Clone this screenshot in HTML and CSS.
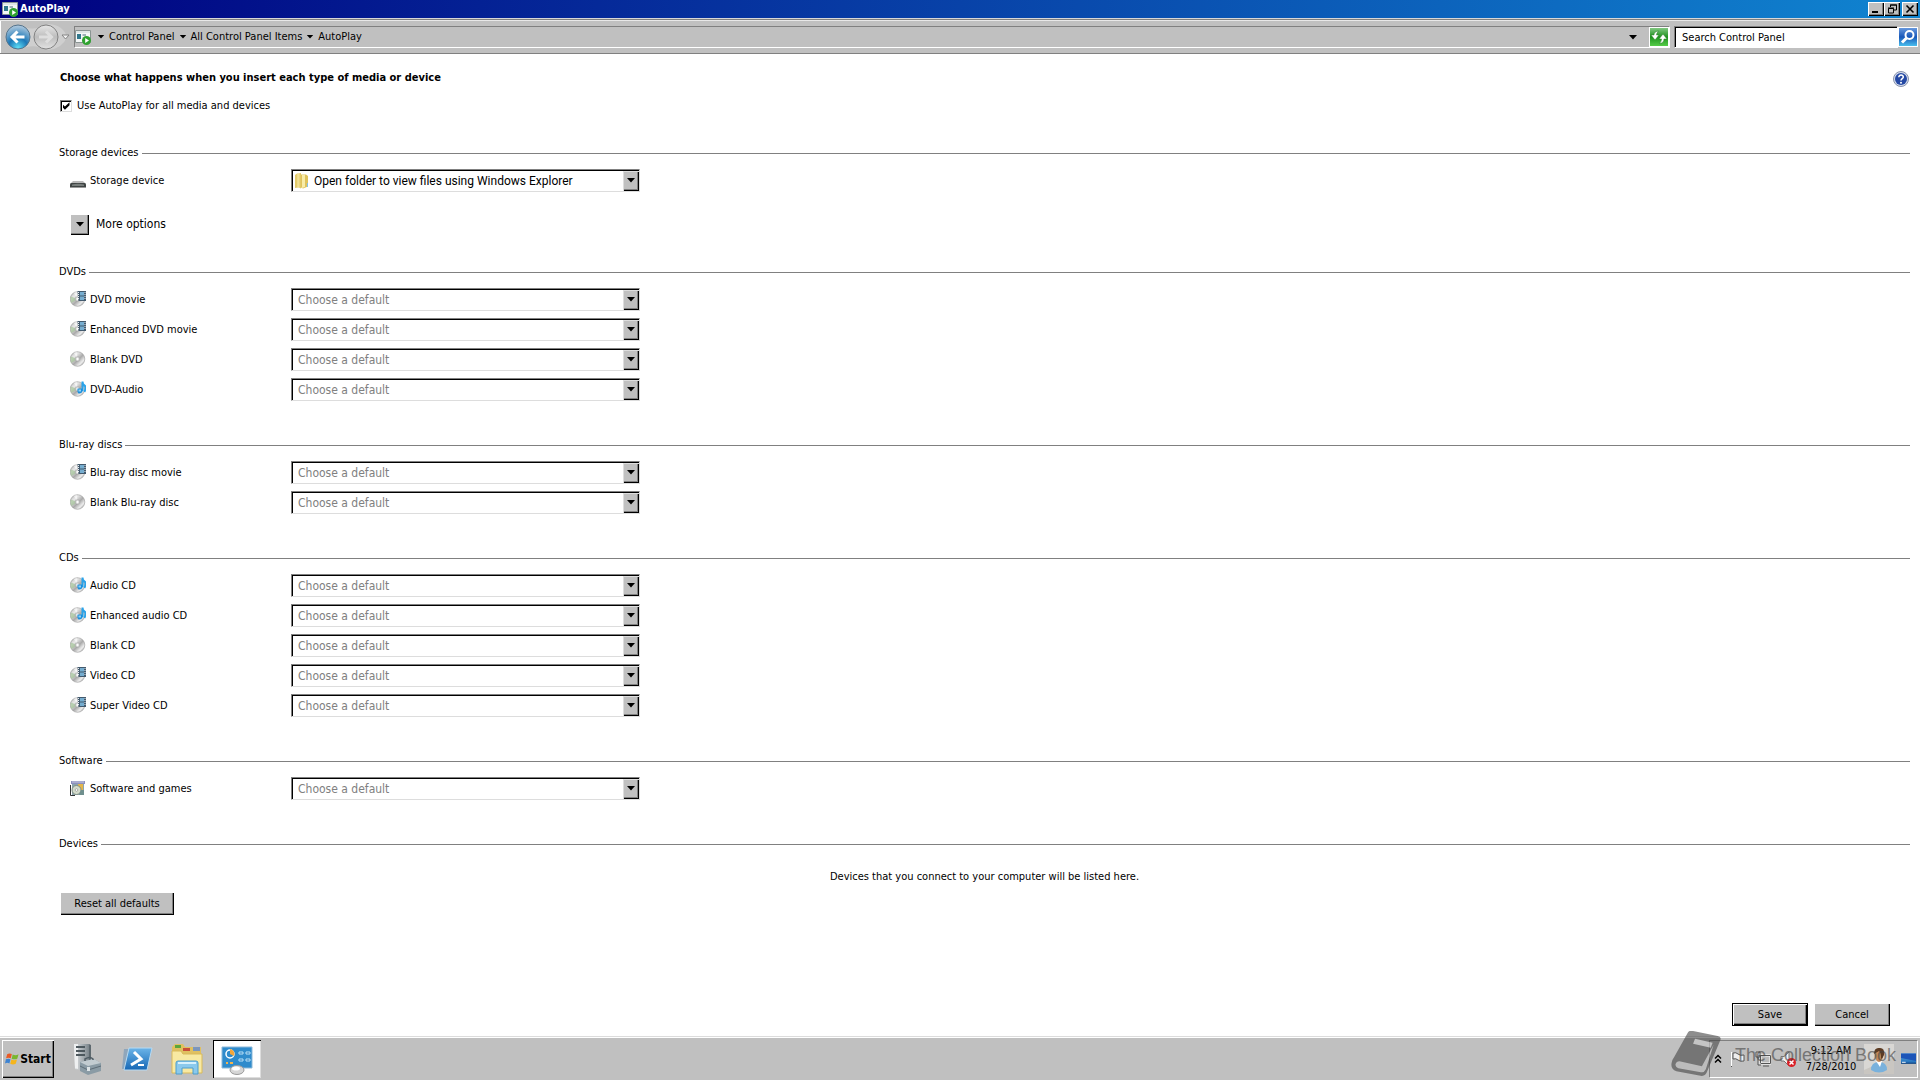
FILE: index.html
```html
<!DOCTYPE html>
<html lang="en">
<head>
<meta charset="utf-8">
<title>AutoPlay</title>
<link rel="stylesheet" href="styles.css">
</head>
<body>
<svg class="defs" aria-hidden="true">
  <defs>
    <linearGradient id="discFill" x1="0" y1="0" x2="1" y2="1"><stop offset="0" stop-color="#a9a9a9"/><stop offset=".3" stop-color="#e9e9e9"/><stop offset=".55" stop-color="#aaa"/><stop offset=".75" stop-color="#ececec"/><stop offset="1" stop-color="#909090"/></linearGradient>
    <linearGradient id="blueFill" x1="0" y1="0" x2="0" y2="1"><stop offset="0" stop-color="#6cb4e8"/><stop offset="1" stop-color="#1667b5"/></linearGradient>
    <linearGradient id="folderFill" x1="0" y1="0" x2="1" y2="0"><stop offset="0" stop-color="#f8ecaa"/><stop offset="1" stop-color="#dfc35c"/></linearGradient>
    <radialGradient id="backFill" cx=".5" cy=".95" r=".9"><stop offset="0" stop-color="#5fe0f8"/><stop offset=".45" stop-color="#1b78b8"/><stop offset="1" stop-color="#a9c5dc"/></radialGradient>
    <linearGradient id="forwardFill" x1="0" y1="0" x2="0" y2="1"><stop offset="0" stop-color="#e6e6e6"/><stop offset=".5" stop-color="#bdbdbd"/><stop offset="1" stop-color="#e2e2e2"/></linearGradient>
    <linearGradient id="serverFill" x1="0" y1="0" x2="1" y2="0"><stop offset="0" stop-color="#e3e6e8"/><stop offset="1" stop-color="#7c868c"/></linearGradient>
  </defs>
  <symbol id="disc" viewBox="0 0 16 16"><circle cx="7.500" cy="8" r="7.300" fill="url(#discFill)" stroke="#999" stroke-width=".6"/><path d="M7.500 8 1 5.500A7 7 0 0 0 1.500 12z" fill="#a5c49a" opacity=".7"/><path d="M7.500 8 4 2A7 7 0 0 1 7 1z" fill="#fff" opacity=".6"/><circle cx="7.500" cy="8" r="2.300" fill="#dcdcdc" stroke="#999" stroke-width=".5"/><circle cx="7.500" cy="8" r=".9" fill="#fff"/></symbol>
  <symbol id="movie" viewBox="0 0 16 16"><use href="#disc"/><path d="M7.500 0H16v10H8.500z" fill="#435a6e"/><path d="M10 1h4v3.500h-4zM10 5.500h4V9h-4z" fill="#75add0"/><path d="M8.500 1v8M15 1v8" stroke="#e8eef2" stroke-width="1" stroke-dasharray="1 1"/></symbol>
  <symbol id="audio" viewBox="0 0 16 16"><use href="#disc"/><path d="M12.500 10V0.500q0 3 2 4t0 6.500" fill="none" stroke="#2aa3ea" stroke-width="2"/><path d="M7.500 7.500h5v3q-1 2.500-4 2-1.500-1-1-5z" fill="#1b8fdc"/><path d="M8.500 8.500h2.500v2H8.500z" fill="#8fd2f8"/></symbol>
  <symbol id="software" viewBox="0 0 16 16"><path d="M1 1h14v3H1z" fill="#8d90bd"/><path d="M2 2h12" stroke="#c9cbe4"/><path d="M2 4h12v11H2z" fill="#8ca4ae"/><path d="M8 4h5v6H8z" fill="#e4b54a"/><circle cx="6.500" cy="10" r="4.500" fill="#d4dccc" stroke="#7f8d83"/><circle cx="6.500" cy="10" r="1.300" fill="#fff" stroke="#777" stroke-width=".5"/><path d="M.5 5v10.500H5" stroke="#333" fill="none"/><path d="M11 10h3v5h-5z" fill="#6f8f8e"/></symbol>
  <symbol id="drive" viewBox="0 0 16 16"><path d="M3 9h10l3 3H0z" fill="#b9b9b9"/><rect y="11" width="16" height="5" rx="1.500" fill="#3e4443"/><path d="M2 12.500Q8 11 14 12.500V14H2z" fill="#777d7b"/><path d="M0 15.500h16" stroke="#999"/></symbol>
  <symbol id="folder" viewBox="0 0 16 16"><path d="M1 2l2-1.500h4V14l-6 1z" fill="#e3cb6b"/><path d="M3.500 1 7 0v15.500L3.500 14z" fill="url(#folderFill)"/><path d="M7 1.500h5L14 3v10.500l-5 2-2-1z" fill="#dfc35c"/><path d="M8 2h3v12l-3 1z" fill="#f8eca8"/><path d="M13 10h1v4h-1z" fill="#86bfe2"/></symbol>
  <symbol id="autoplay" viewBox="0 0 16 16"><path d="M.5 1.500h15v12H.5z" fill="#f5f7f7" stroke="#8a9493"/><path d="M1 2h14v2H1z" fill="#dfe6e6"/><path d="M2 5h4v5H2z" fill="#31788d"/><path d="M7.500 5H11v2H7.500z" fill="#9eb1b8"/><circle cx="11.500" cy="11.500" r="4.500" fill="#2fa22f"/><path d="M10.200 9v5l3.800-2.500z" fill="#fff"/></symbol>
  <symbol id="arrow" viewBox="0 0 10 5"><path d="M1 0h8L5 4.500z"/></symbol>
</svg>

<header>
  <div class="titlebar">
    <svg class="icon"><use href="#autoplay"/></svg>
    <h1>AutoPlay</h1>
    <div class="window-controls">
      <button class="win-btn" aria-label="Minimize"><svg viewBox="0 0 12 10"><path d="M2 7h6v2H2z"/></svg></button>
      <button class="win-btn" aria-label="Restore"><svg viewBox="0 0 12 10"><path d="M4.500 3V1h6v5H8M4 1h7M2.500 4.500h5V9h-5zM2 4h6" fill="none" stroke="#000"/></svg></button>
      <button class="win-btn close" aria-label="Close"><svg viewBox="0 0 12 10"><path d="M2.500 1.500l7 7M9.500 1.500l-7 7" stroke="#000" stroke-width="1.600"/></svg></button>
    </div>
  </div>
  <div class="navbar">
    <svg class="history" viewBox="0 0 66 28">
      <path d="M14 3Q31 9 45 1q14 1 18 13-5 12-19 13-14-7-30-1z" fill="#cfcfcf"/>
      <circle cx="14" cy="14" r="12" fill="url(#backFill)" stroke="#55748c"/>
      <path d="M20.500 14H9M13.500 8.500 8 14l5.500 5.500" fill="none" stroke="#fff" stroke-width="3"/>
      <circle cx="42" cy="14" r="12" fill="url(#forwardFill)" stroke="#828282"/>
      <path d="M35 14h12M42 8.500l5.500 5.500-5.500 5.500" fill="none" stroke="#dedede" stroke-width="3"/>
      <path d="M58 12h7l-3.500 4z" fill="#f4f4f4" stroke="#858585"/>
    </svg>
    <nav class="address">
      <svg class="icon"><use href="#autoplay"/></svg>
      <svg class="caret first"><use href="#arrow"/></svg>
      <a href="#">Control Panel</a>
      <svg class="caret"><use href="#arrow"/></svg>
      <a href="#">All Control Panel Items</a>
      <svg class="caret"><use href="#arrow"/></svg>
      <a href="#">AutoPlay</a>
      <button class="history-btn" aria-label="Previous locations"><svg class="arrow"><use href="#arrow"/></svg></button>
      <button class="square refresh" aria-label="Refresh"><svg viewBox="0 0 18 18"><path d="M8.500 3Q4 3.500 4 7H1l4 5 4-5H6.500Q6.500 5 8.500 3zM9.500 15.500Q14 15 14 11h3l-4-5-4 5h2.500Q11.500 13.500 9.500 15.500z" fill="#fff" stroke="#237a22" stroke-width=".5"/></svg></button>
    </nav>
    <div class="search">
      <input type="text" value="Search Control Panel" aria-label="Search Control Panel">
      <button class="square find" aria-label="Search"><svg viewBox="0 0 18 18"><circle cx="10.500" cy="7" r="4" fill="none" stroke="#fff" stroke-width="2"/><path d="M7.500 10 3 14.500" stroke="#fff" stroke-width="3"/></svg></button>
    </div>
  </div>
</header>

<main>
  <div class="intro">
    <h2>Choose what happens when you insert each type of media or device</h2>
    <a class="help" href="#" aria-label="Help"><svg viewBox="0 0 16 16"><circle cx="8" cy="8" r="7.500" fill="#d5dcec" stroke="#8792ad"/><circle cx="8" cy="8" r="6" fill="#2549a4"/><path d="M5.800 6.300C5.800 3.200 10.500 3.500 10.300 6.200 10.100 7.700 8 7.800 8 9.500" fill="none" stroke="#fff" stroke-width="1.500"/><circle cx="8" cy="11.800" r="1" fill="#fff"/></svg></a>
  </div>
  <label class="use-all"><input type="checkbox" checked>Use AutoPlay for all media and devices</label>

  <section class="storage">
    <h3>Storage devices</h3>
    <div class="row"><label for="s1"><svg class="icon"><use href="#drive"/></svg>Storage device</label>
      <span class="combo chosen"><svg class="icon"><use href="#folder"/></svg><select id="s1"><option>Open folder to view files using Windows Explorer</option></select><span class="drop"><svg class="arrow"><use href="#arrow"/></svg></span></span></div>
    <div class="more"><button id="more" class="more-btn" aria-labelledby="moreText"><svg class="arrow"><use href="#arrow"/></svg></button><label id="moreText" for="more">More options</label></div>
  </section>

  <section>
    <h3>DVDs</h3>
    <div class="row"><label for="d1"><svg class="icon"><use href="#movie"/></svg>DVD movie</label><span class="combo"><select id="d1"><option>Choose a default</option></select><span class="drop"><svg class="arrow"><use href="#arrow"/></svg></span></span></div>
    <div class="row"><label for="d2"><svg class="icon"><use href="#movie"/></svg>Enhanced DVD movie</label><span class="combo"><select id="d2"><option>Choose a default</option></select><span class="drop"><svg class="arrow"><use href="#arrow"/></svg></span></span></div>
    <div class="row"><label for="d3"><svg class="icon"><use href="#disc"/></svg>Blank DVD</label><span class="combo"><select id="d3"><option>Choose a default</option></select><span class="drop"><svg class="arrow"><use href="#arrow"/></svg></span></span></div>
    <div class="row"><label for="d4"><svg class="icon"><use href="#audio"/></svg>DVD-Audio</label><span class="combo"><select id="d4"><option>Choose a default</option></select><span class="drop"><svg class="arrow"><use href="#arrow"/></svg></span></span></div>
  </section>

  <section>
    <h3>Blu-ray discs</h3>
    <div class="row"><label for="b1"><svg class="icon"><use href="#movie"/></svg>Blu-ray disc movie</label><span class="combo"><select id="b1"><option>Choose a default</option></select><span class="drop"><svg class="arrow"><use href="#arrow"/></svg></span></span></div>
    <div class="row"><label for="b2"><svg class="icon"><use href="#disc"/></svg>Blank Blu-ray disc</label><span class="combo"><select id="b2"><option>Choose a default</option></select><span class="drop"><svg class="arrow"><use href="#arrow"/></svg></span></span></div>
  </section>

  <section>
    <h3>CDs</h3>
    <div class="row"><label for="c1"><svg class="icon"><use href="#audio"/></svg>Audio CD</label><span class="combo"><select id="c1"><option>Choose a default</option></select><span class="drop"><svg class="arrow"><use href="#arrow"/></svg></span></span></div>
    <div class="row"><label for="c2"><svg class="icon"><use href="#audio"/></svg>Enhanced audio CD</label><span class="combo"><select id="c2"><option>Choose a default</option></select><span class="drop"><svg class="arrow"><use href="#arrow"/></svg></span></span></div>
    <div class="row"><label for="c3"><svg class="icon"><use href="#disc"/></svg>Blank CD</label><span class="combo"><select id="c3"><option>Choose a default</option></select><span class="drop"><svg class="arrow"><use href="#arrow"/></svg></span></span></div>
    <div class="row"><label for="c4"><svg class="icon"><use href="#movie"/></svg>Video CD</label><span class="combo"><select id="c4"><option>Choose a default</option></select><span class="drop"><svg class="arrow"><use href="#arrow"/></svg></span></span></div>
    <div class="row"><label for="c5"><svg class="icon"><use href="#movie"/></svg>Super Video CD</label><span class="combo"><select id="c5"><option>Choose a default</option></select><span class="drop"><svg class="arrow"><use href="#arrow"/></svg></span></span></div>
  </section>

  <section>
    <h3>Software</h3>
    <div class="row"><label for="g1"><svg class="icon"><use href="#software"/></svg>Software and games</label><span class="combo"><select id="g1"><option>Choose a default</option></select><span class="drop"><svg class="arrow"><use href="#arrow"/></svg></span></span></div>
  </section>

  <section>
    <h3>Devices</h3>
    <p class="empty">Devices that you connect to your computer will be listed here.</p>
    <button class="btn reset">Reset all defaults</button>
  </section>
</main>

<div class="actions">
  <button class="btn default">Save</button>
  <button class="btn">Cancel</button>
</div>

<footer class="taskbar">
  <button class="start"><svg viewBox="0 0 16 16"><path d="M2.500 2.500Q5 .8 7.800 2.400L6.600 7.200Q4 6 1.200 7.200z" fill="#ea5a26"/><path d="M8.800 2.800Q12 4.500 15.500 2.600L14 7.600Q10.500 9 7.600 7.600z" fill="#79b62d"/><path d="M1 8.200Q3.800 7 6.300 8.200L5 13Q2.500 11.600 0 13z" fill="#3d83d2"/><path d="M7.300 8.600Q10.300 10 13.700 8.600L12.300 13.500Q9.200 15 6 13.500z" fill="#f5b51c"/></svg>Start</button>
  <div class="apps">
    <button class="app" aria-label="Server Manager"><svg viewBox="0 0 32 32"><path d="M3 1h15v23l-4 4-10-2z" fill="url(#serverFill)"/><path d="M3 1h4v25l-3-1z" fill="#eef0f1"/><path d="M5 4h9M5 8h9M5 12h9" stroke="#4d585e" stroke-width="2"/><path d="M18 1l2 1v16l-2 2z" fill="#5e696f"/><path d="M9 19l14-3 7 4v8l-13 4-8-4z" fill="#8a9ba5"/><path d="M9 19l14-3 7 4-13 3z" fill="#c2ccd1"/><path d="M14 18v-2q5-3 8 0v1" fill="none" stroke="#4f5c64" stroke-width="1.500"/><path d="M9 23l8 4 13-4" fill="none" stroke="#5d6d77"/><path d="M16 24h3v4h-3z" fill="#dce3e6"/></svg></button>
    <button class="app" aria-label="Windows PowerShell"><svg viewBox="0 0 32 32"><path d="M3 6h24l-4 20H1z" fill="#8fa6bb"/><path d="M8 5h23l-5 22H3z" fill="url(#blueFill)" stroke="#b7daf2"/><path d="M13 9l7 7-10 6" fill="none" stroke="#fff" stroke-width="3"/><path d="M17 22h6" stroke="#fff" stroke-width="2"/></svg></button>
    <button class="app" aria-label="Windows Explorer"><svg viewBox="0 0 32 32"><path d="M1 4l3-3h8l2 3h16v24H1z" fill="#e0c060"/><path d="M4 2h6v3H4z" fill="#5ca63b"/><path d="M12 5h7v3h-7z" fill="#c94e38"/><path d="M22 4h7v4h-7z" fill="#7b96bd"/><path d="M1 8h9l2 3h19v19H1z" fill="#f8e9a2" stroke="#d8b95a"/><path d="M5 31V20q0-2 2-2h18q2 0 2 2v11h-5v-6H11v6z" fill="#8ac9ec" stroke="#4c9dcc"/><path d="M7 20h18" stroke="#d6f1fd" stroke-width="2"/></svg></button>
    <button class="app active" aria-label="Control Panel"><svg viewBox="0 0 32 32"><path d="M1 4h30v21H1z" fill="#2f8bcc" stroke="#8db9d9"/><circle cx="9" cy="11" r="4" fill="none" stroke="#fff" stroke-width="1.500"/><path d="M9 11V6a5 5 0 0 1 4 7z" fill="#f5a63a"/><path d="M18 9h4v2h-4zM25 9h4v2h-4zM18 16h4v2h-4zM25 16h4v2h-4z" fill="#2579be" stroke="#b9e2f8"/><path d="M5 19h2v2H5zM9 19h3v2H9z" fill="#f5b44a"/><ellipse cx="16" cy="27" rx="7" ry="4.500" fill="#d6d6d6" stroke="#999"/><ellipse cx="15" cy="25.500" rx="4" ry="2" fill="#fff"/></svg></button>
  </div>
  <div class="tray">
    <svg class="chevrons" viewBox="0 0 8 10"><path d="M1 4.500l3-3 3 3M1 8.500l3-3 3 3" fill="none" stroke="#000" stroke-width="1.500"/></svg>
    <svg class="status" viewBox="0 0 16 16"><path d="M1.500 1v15M3 2q3-1 5 1t6 1v6q-4 1-6-1t-5-1z" fill="#eee" stroke="#555"/><path d="M1.500 1v14" stroke="#fff"/></svg>
    <svg class="status" viewBox="0 0 16 16"><path d="M5.500 4.500h10v8h-10z" fill="#bbb" stroke="#fff" stroke-width="2"/><path d="M5.500 4.500h10v8h-10zM8 15h6" fill="none" stroke="#555"/><path d="M1 1h4v5H1zM3 6v8h3" fill="#ddd" stroke="#555"/></svg>
    <svg class="status" viewBox="0 0 16 16"><path d="M1 5.500h3L9 1v14l-5-5H1z" fill="#f2f2f2" stroke="#777"/><circle cx="11.500" cy="11.500" r="4.500" fill="#d91f26"/><path d="M9.500 9.500l4 4M13.500 9.500l-4 4" stroke="#fff" stroke-width="1.500"/></svg>
    <time class="clock"><span>9:12 AM</span><span>7/28/2010</span></time>
    <svg class="user" viewBox="0 0 30 30"><path d="M0 0h30v30H0z" fill="#c9c6c1"/><path d="M0 0h30v13L0 26z" fill="#d9d7d4"/><path d="M7 26q0-8 8-8t8 8q-8 5-16 0z" fill="#79b1dc"/><path d="M12 17h6l-2 6z" fill="#fff"/><ellipse cx="15" cy="11" rx="4" ry="7" fill="#c28a5a"/><path d="M10 10q0-7 6-6 5 0 4 7-1 3-3 4 0-7-2-8z" fill="#5b3b24"/></svg>
    <svg class="desktop" viewBox="0 0 16 12"><path d="M0 0h16v11H0z" fill="url(#blueFill)"/><path d="M0 0h16v8L0 5z" fill="#1c54b8"/><path d="M0 10.500h16" stroke="#184078"/><path d="M1 9.500h4" stroke="#fff"/></svg>
  </div>
  <div class="watermark">
    <svg viewBox="0 0 52 48"><path d="M17 1q2-2 5-1l25 5q4 1 3 4L36 42q-1 3-5 4L5 41q-6-2-5-8 0-3 3-7z" fill="#444"/><path d="M4 34q1-3 4-3l23 5 12-22-8 25q-2 4-5 3L7 38q-3-1-3-4z" fill="#bbb"/><path d="M24 8l18 4-2 5-18-4z" fill="#c8c8c8"/></svg>
    <span>The Collection Book</span>
  </div>
</footer>
</body>
</html>
```
FILE: styles.css
```css
* { box-sizing: border-box; }

body {
  margin: 0;
  min-height: 100vh;
  display: flex;
  flex-direction: column;
  background: #fff;
  color: #000;
  font: 11px/16px "DejaVu Sans Condensed", "DejaVu Sans", sans-serif;
}

h1, h2, h3, p { margin: 0; font-size: inherit; }
button, input, select { font: inherit; color: inherit; border-radius: 0; }
button { padding: 0; border: 0; background: none; }
svg { display: block; flex: none; }
a { color: inherit; text-decoration: none; }

.defs { position: absolute; width: 0; height: 0; }
.icon { width: 16px; height: 16px; }
.arrow { width: 10px; height: 5px; }

/* Title bar */
.titlebar {
  display: flex;
  align-items: center;
  height: 18px;
  padding: 0 2px;
  gap: 2px;
  background: linear-gradient(90deg, #000080, #1084d0);
  color: #fff;
}
.titlebar h1 { flex: 1; font-weight: bold; line-height: 18px; }
.window-controls { display: flex; }
.win-btn {
  display: grid;
  place-items: center;
  width: 16px;
  height: 14px;
  background: #c0c0c0;
  box-shadow: inset 1px 1px #fff, inset -1px -1px #000, inset -2px -2px #808080;
}
.win-btn svg { width: 12px; height: 10px; }
.close { margin-left: 2px; }

/* Navigation bar */
.navbar {
  display: flex;
  align-items: center;
  height: 36px;
  padding: 2px 2px 0 4px;
  gap: 4px;
  background: #c0c0c0;
  border-top: 1px solid #d8d8d8;
  border-bottom: 1px solid #808080;
  box-shadow: inset 0 1px #808080, inset 0 2px #e8e8e8, inset 1px 0 #fff;
}
.history { width: 66px; height: 28px; }
.address {
  flex: 1;
  display: flex;
  align-items: center;
  height: 22px;
  border: 1px solid #808080;
  border-right-color: #fff;
  border-bottom-color: #fff;
}
.caret { width: 8px; height: 4px; margin: 0 4px; }
.caret.first { margin-left: 6px; }
.history-btn { display: grid; place-items: center; width: 20px; height: 18px; margin: 0 6px 0 auto; }
.square { display: grid; place-items: center; flex: none; width: 20px; height: 20px; border: 1px solid #fff; }
.square svg { width: 18px; height: 18px; }
.refresh { background: linear-gradient(#82c882, #1e921e 50%, #55cc48); }
.find { background: linear-gradient(#6798dd, #1857b9 50%, #4abfee); }
.search { display: flex; align-items: center; }
.search input {
  width: 224px;
  height: 22px;
  padding: 0 7px;
  background: #fff;
  border: 1px solid;
  border-color: #808080 #fff #fff #808080;
  box-shadow: inset 1px 1px #000;
  outline: 0;
}

/* Settings */
main { flex: 1; padding: 15px 10px 0 59px; }
.intro { display: flex; justify-content: space-between; height: 18px; }
.intro h2 { padding-left: 1px; font-weight: bold; line-height: 18px; }
.help svg { width: 16px; height: 16px; margin: 2px 1px 0 0; }
.use-all { display: flex; align-items: center; height: 18px; margin: 10px 0 30px; gap: 5px; }
.use-all input {
  appearance: none;
  display: grid;
  place-items: center;
  width: 12px;
  height: 12px;
  margin: 0 0 0 1px;
  border: 1px solid;
  border-color: #808080 #ddd #ddd #808080;
  box-shadow: inset 1px 1px #000;
}
.use-all input:checked::before {
  content: "";
  width: 7px;
  height: 9px;
  background: #000;
  clip-path: polygon(0 30%, 35% 55%, 100% 8%, 100% 42%, 35% 92%, 0 65%);
}

section { margin-bottom: 32px; }
section.storage { margin-bottom: 29px; }
section h3 { display: flex; align-items: center; gap: 3px; margin-bottom: 5px; font-weight: normal; }
section h3::after { content: ""; flex: 1; height: 1px; background: #808080; }
.row { display: flex; align-items: center; height: 30px; padding-left: 11px; }
.row label { display: flex; align-items: center; width: 221px; gap: 4px; }
.row label .icon { margin-bottom: 2px; }
.combo {
  display: flex;
  align-items: center;
  width: 349px;
  height: 23px;
  margin-bottom: 2px;
  padding: 2px 1px 1px 2px;
  border: 1px solid;
  border-color: #808080 #ddd #ddd #808080;
  box-shadow: inset 1px 1px #000;
  position: relative;
}
.combo select {
  appearance: none;
  flex: 1;
  width: 100%;
  height: 19px;
  padding: 0 20px 0 4px;
  border: 0;
  background: none;
  outline: 0;
  color: #808080;
  font-size: 12px;
}
.combo.chosen select { color: #000; font-family: Roboto, sans-serif; }
.drop {
  position: absolute;
  right: 0;
  top: 1px;
  display: grid;
  place-items: center;
  width: 16px;
  height: 20px;
  background: #c0c0c0;
  box-shadow: inset 1px 1px #ddd, inset -1px -1px #000, inset -2px -2px #808080;
  pointer-events: none;
}
.more { display: flex; align-items: center; gap: 7px; height: 22px; margin: 17px 0 0 11px; font-size: 12px; }
.more-btn {
  display: grid;
  place-items: center;
  width: 19px;
  height: 21px;
  background: #c0c0c0;
  box-shadow: inset 1px 1px #fff, inset -1px -1px #000, inset -2px -2px #808080;
}
.empty { margin: 17px 0 7px; text-align: center; }

.btn {
  width: 76px;
  height: 23px;
  background: #c0c0c0;
  box-shadow: inset 1px 1px #fff, inset -1px -1px #000, inset -2px -2px #808080;
}
.btn.reset { width: 114px; margin-left: 1px; }
.btn.default { border: 1px solid #000; }
.actions { display: flex; justify-content: flex-end; gap: 6px; padding: 0 30px 10px; }

/* Taskbar */
.taskbar {
  position: relative;
  display: flex;
  align-items: center;
  height: 44px;
  padding: 2px 2px 1px;
  background: #c0c0c0;
  border-top: 1px solid #dcdcdc;
  box-shadow: inset 0 1px #fff;
}
.start {
  display: flex;
  align-items: center;
  justify-content: center;
  gap: 1px;
  width: 52px;
  height: 38px;
  font-size: 12px;
  font-weight: bold;
  box-shadow: inset 1px 1px #fff, inset -1px -1px #000, inset -2px -2px #808080;
}
.start svg { width: 14px; height: 16px; }
.apps { display: flex; gap: 2px; margin-left: 9px; }
.app { display: grid; place-items: center; width: 48px; height: 38px; }
.app svg { width: 32px; height: 32px; }
.app.active { background: #fff; box-shadow: inset 1px 1px #000, inset -1px -1px #ddd; }
.tray {
  display: flex;
  align-items: center;
  gap: 7px;
  height: 38px;
  margin-left: auto;
  padding: 0 0 0 4px;
  border: 1px solid;
  border-color: #808080 #fff #fff #808080;
}
.chevrons { width: 8px; height: 10px; margin-right: 1px; }
.status { width: 16px; height: 16px; margin-right: 2px; }
.clock { display: flex; flex-direction: column; align-items: center; width: 52px; }
.user { width: 30px; height: 30px; }
.desktop { width: 15px; height: 12px; margin-right: 1px; }

/* Watermark lies over the taskbar */
.watermark {
  position: absolute;
  right: 24px;
  bottom: 2px;
  display: flex;
  align-items: center;
  gap: 12px;
  opacity: .6;
  pointer-events: none;
  color: #444;
  font: 18px/24px "Liberation Sans", sans-serif;
}
.watermark svg { width: 52px; height: 47px; }
```
